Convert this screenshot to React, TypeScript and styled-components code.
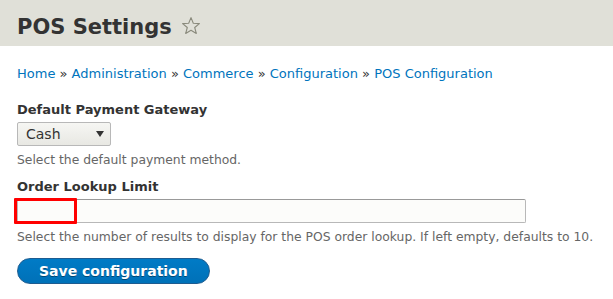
import React from "react"
import styled, { createGlobalStyle } from "styled-components"

const Global = createGlobalStyle`
  html, body {
    margin: 0;
    padding: 0;
    background: #fff;
  }
  body {
    font-family: "DejaVu Sans", Verdana, sans-serif;
    font-size: 13px;
    color: #333;
  }
`

const Header = styled.header`
  box-sizing: border-box;
  background: #e0e0d8;
  height: 46px;
  padding: 7px 17px 0;
  display: flex;
  align-items: center;
`

const Title = styled.h1`
  margin: 0;
  font-size: 21px;
  font-weight: bold;
  color: #333;
  display: flex;
  align-items: center;
  gap: 9px;
`

const Star = styled.svg`
  width: 20px;
  height: 20px;
  margin-top: -1px;
`

const Main = styled.main`
  padding: 19px 17px 0;
`

const Breadcrumb = styled.nav`
  font-size: 13px;
  color: #333;
  line-height: 17px;
  margin-bottom: 19px;
  a {
    color: #0074bd;
    text-decoration: none;
  }
`

const Field = styled.div`
  position: relative;
  display: flex;
  flex-direction: column;
  align-items: flex-start;
  margin-bottom: 10px;
`

const Label = styled.label`
  font-weight: bold;
  font-size: 13px;
  line-height: 17px;
  margin-bottom: 4px;
`

const Select = styled.div`
  box-sizing: border-box;
  width: 94px;
  height: 24px;
  display: flex;
  align-items: center;
  justify-content: space-between;
  padding: 0 6px 0 8px;
  border: 1px solid #b8b8b8;
  border-radius: 2px;
  background: linear-gradient(#f6f6f3, #e8e8e3);
  font-size: 14px;
  color: #333;
`

const Arrow = styled.span`
  width: 0;
  height: 0;
  border-left: 4.5px solid transparent;
  border-right: 4.5px solid transparent;
  border-top: 6px solid #333;
`

const TextInput = styled.div`
  box-sizing: border-box;
  width: 509px;
  height: 24px;
  border: 1px solid #b8b8b8;
  border-top-color: #999;
  border-radius: 2px;
  background: #fcfcfa;
`

const Description = styled.div`
  font-size: 12.35px;
  line-height: 16px;
  color: #666;
  margin-top: 6px;
`

const Highlight = styled.div`
  position: absolute;
  left: -3px;
  top: 20px;
  width: 57px;
  height: 20px;
  border: 3px solid #ff0000;
  border-radius: 1px;
`

const Button = styled.button`
  margin-top: 3px;
  height: 26px;
  padding: 0 21px;
  border: 1px solid #1e5c90;
  border-radius: 20px;
  background: linear-gradient(#007bc6, #0071b8);
  color: #fff;
  font-family: inherit;
  font-weight: bold;
  font-size: 14px;
  text-shadow: 0 1px rgba(0, 0, 0, 0.4);
`

export default function App() {
  return (
    <>
      <Global />
      <Header>
        <Title>
          POS Settings
          <Star viewBox="0 0 20 20">
            <path
              d="M10 1.6 L12.3 7.3 L18.4 7.6 L13.7 11.5 L15.3 17.5 L10 14.2 L4.7 17.5 L6.3 11.5 L1.6 7.6 L7.7 7.3 Z"
              fill="none"
              stroke="#8a8a7c"
              strokeWidth="1.1"
              strokeLinejoin="round"
            />
          </Star>
        </Title>
      </Header>
      <Main>
        <Breadcrumb>
          <a href="#">Home</a> » <a href="#">Administration</a> »{" "}
          <a href="#">Commerce</a> » <a href="#">Configuration</a> »{" "}
          <a href="#">POS Configuration</a>
        </Breadcrumb>
        <Field>
          <Label>Default Payment Gateway</Label>
          <Select>
            Cash
            <Arrow />
          </Select>
          <Description>Select the default payment method.</Description>
        </Field>
        <Field>
          <Label>Order Lookup Limit</Label>
          <TextInput />
          <Highlight />
          <Description>
            Select the number of results to display for the POS order lookup.
            If left empty, defaults to 10.
          </Description>
        </Field>
        <Button>Save configuration</Button>
      </Main>
    </>
  )
}
